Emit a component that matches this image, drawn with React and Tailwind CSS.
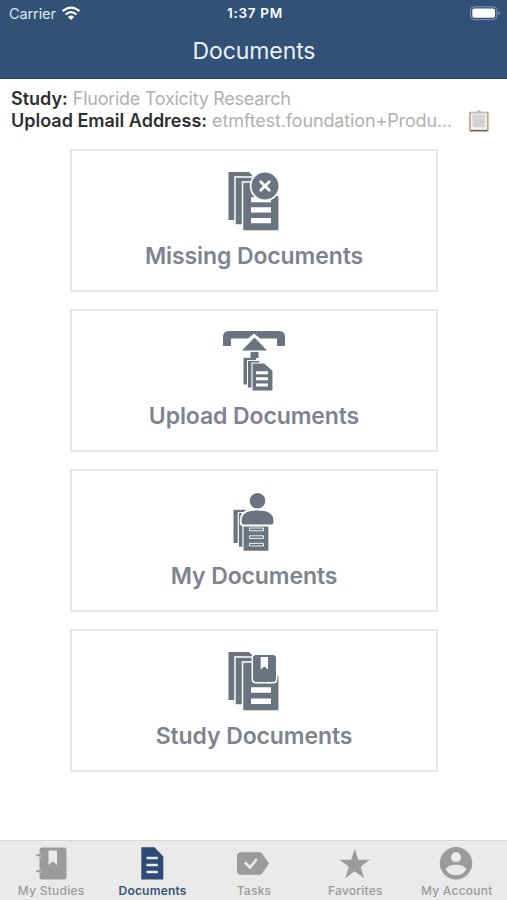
import React from 'react';

/**
 * Stack of pages shared by the large document icons.
 */
const PageStack = () => (
    <>
        <path d="M13.5 12H34L37 15V60H13.5Z" fill="#6a7481" />
        <path d="M20 17H40V65H20Z" fill="#6a7481" stroke="#fff" strokeWidth="1.5" />
        <path d="M27.5 22H50L64.2 36.5V71H27.5Z" fill="#6a7481" stroke="#fff" strokeWidth="1.5" />
    </>
);

const MissingIcon = () => (
    <svg viewBox="-1 0 80 80" className="h-20 w-20">
        <PageStack />
        <path d="M36 37.2H56V42.2H36ZM36 47.2H56V52.4H36ZM36 58H56V63.2H36Z" fill="#fff" />
        <circle cx="50" cy="26" r="14.4" fill="#6a7481" stroke="#fff" strokeWidth="1.7" />
        <path d="M45.7 21.7L54.3 30.3M54.3 21.7L45.7 30.3" stroke="#fff" strokeWidth="2.8" strokeLinecap="round" />
    </svg>
);

const UploadIcon = () => (
    <svg viewBox="-1 0 80 80" className="h-20 w-20">
        <path d="M8 26V17Q8 11 14 11H64Q70 11 70 17V26H62V18.5H45L39 13.5L33 18.5H16V26Z" fill="#6a7481" />
        <path d="M39.5 17.5L52 30.5H27Z" fill="#6a7481" />
        <path d="M35.5 32H43.5V38H35.5Z" fill="#6a7481" />
        <path d="M28.5 37.8H41V64.5H28.5Z" fill="#6a7481" />
        <path d="M32.5 40.5H45V68H32.5Z" fill="#6a7481" stroke="#fff" strokeWidth="1" />
        <path d="M37 43H49.5L58 50.7V71H37Z" fill="#6a7481" stroke="#fff" strokeWidth="1.1" />
        <path d="M41 51.2H53V54.2H41ZM41 57.2H53V60.2H41ZM41 63.5H53V66.5H41Z" fill="#fff" />
    </svg>
);

const PersonIcon = () => (
    <svg viewBox="-1 0 80 80" className="h-20 w-20">
        <path d="M18.5 29.8H34V63H18.5Z" fill="#6a7481" />
        <path d="M23.3 32.5H36V67.3H23.3Z" fill="#6a7481" stroke="#fff" strokeWidth="1.2" />
        <path d="M28 36H54V71.3H28Z" fill="#6a7481" stroke="#fff" strokeWidth="1.2" />
        <path d="M34.5 48H48.5V50.8H34.5ZM34.5 55.8H48.5V58.4H34.5ZM34.5 63.4H48.5V66H34.5Z" stroke="#fff" strokeWidth="0.9" fill="none" />
        <path d="M25.7 42.5V40Q26 31.5 36 30Q42.5 29 49 30Q59 31.5 59.3 40V42.5Q59.3 45.5 56 45.5H29Q25.7 45.5 25.7 42.5Z" fill="#6a7481" stroke="#fff" strokeWidth="1.8" />
        <circle cx="42.5" cy="20.8" r="8.4" fill="#6a7481" stroke="#fff" strokeWidth="1.2" />
    </svg>
);

const StudyIcon = () => (
    <svg viewBox="-1 0 80 80" className="h-20 w-20">
        <PageStack />
        <path d="M36 47.2H56V52.8H36ZM36 58.5H56V64H36Z" fill="#fff" />
        <path d="M37.3 18Q37.3 14.3 41 14.3H58Q61.7 14.3 61.7 18V39Q61.7 42.8 58 42.8H41Q37.3 42.8 37.3 39Z" fill="#6a7481" stroke="#fff" strokeWidth="1.5" />
        <path d="M45.7 17H53V29.5L49.3 26.5L45.7 29.5Z" fill="#fff" />
    </svg>
);

const StudiesTabIcon = () => (
    <svg viewBox="-2 0 36 36" className="h-9 w-9">
        <path d="M7 2.5H29Q31.5 2.5 31.5 5V32Q31.5 34.5 29 34.5H7Q4.5 34.5 4.5 32V5Q4.5 2.5 7 2.5Z" fill="#9b9b9b" />
        <path d="M4.8 7.8Q7.4 10.2 4.8 12.6M4.8 23.8Q7.4 26.2 4.8 28.6" stroke="#eaeaea" strokeWidth="0.7" fill="none" />
        <path d="M2 10.2H5.3M2 26.2H5.3" stroke="#9b9b9b" strokeWidth="2" strokeLinecap="round" />
        <path d="M13.5 5.5H22V20L17.8 16.2L13.5 20Z" fill="#eaeaea" />
    </svg>
);

const DocumentTabIcon = () => (
    <svg viewBox="0 0 36 36" className="h-9 w-9">
        <path d="M7.3 2.2H20.5L29.3 11.5V34.5H7.3Z" fill="#2d4b74" />
        <path d="M12.5 13H23.8M12.5 20H23.8M12.5 27H23.8" stroke="#eaeaea" strokeWidth="2.4" />
    </svg>
);

const TaskTabIcon = () => (
    <svg viewBox="0 0 36 36" className="h-9 w-9">
        <path d="M6 7.3H24.5Q26 7.3 27 8.5L34 18.5L27 28.5Q26 29.7 24.5 29.7H6Q2 29.7 2 25.7V11.3Q2 7.3 6 7.3Z" fill="#9b9b9b" />
        <path d="M10 17.5L15 22.5L21.8 14" stroke="#eaeaea" strokeWidth="2.7" fill="none" />
    </svg>
);

const StarTabIcon = () => (
    <svg viewBox="0 0 36 36" className="h-9 w-9">
        <path d="M17.7 3.8L21.2 14.8H32.9L23.6 21.7L27.1 33.3L17.7 26.3L8.3 33.3L11.8 21.7L2.4 14.8H14.2Z" fill="#9b9b9b" />
    </svg>
);

const AccountTabIcon = () => (
    <svg viewBox="0 0 36 36" className="h-9 w-9">
        <circle cx="18" cy="18.3" r="16.2" fill="#9b9b9b" />
        <circle cx="18" cy="12.2" r="5" fill="#eaeaea" />
        <path d="M7.5 24.2Q10.5 19.8 18 19.8Q25.5 19.8 28.5 24.2Q25 30.3 18 30.3Q11 30.3 7.5 24.2Z" fill="#eaeaea" />
    </svg>
);

const WifiIcon = () => (
    <svg viewBox="0 0 20 15" className="h-[15px] w-5" fill="none" stroke="#fff" strokeWidth="2.2">
        <path d="M1.6 5.2Q10 -2 18.4 5.2" />
        <path d="M4.6 8.5Q10 3.8 15.4 8.5" />
        <path d="M7 10.9Q10 8.2 13 10.9L10 14Z" fill="#fff" stroke="none" />
    </svg>
);

const BatteryIcon = () => (
    <svg viewBox="0 0 32 16" className="h-4 w-8">
        <rect x="1.5" y="0.8" width="26.3" height="12.8" rx="3.7" fill="none" stroke="#8499b5" strokeWidth="1" />
        <rect x="3.3" y="2.6" width="22.7" height="9.2" rx="1.8" fill="#fff" />
        <path d="M29.3 5.2Q31 6 31 7.2Q31 8.4 29.3 9.2Z" fill="#8499b5" />
    </svg>
);

const ClipboardIcon = () => (
    <svg viewBox="0 0 22 24" className="h-6 w-[22px] shrink-0">
        <rect x="1.2" y="2.8" width="19.4" height="20" rx="1.3" fill="#b09a70" />
        <rect x="2.7" y="3.4" width="16.4" height="17.8" fill="#f4f4f4" />
        <rect x="4.5" y="5.6" width="12.8" height="12.6" fill="#d3d2d5" />
        <path d="M2.7 21.4H19.1" stroke="#67635f" strokeWidth="1.1" />
        <path d="M3 4.6V3.2H8.5Q9 1.2 11 1.2T13.5 3.2H19V4.6Z" fill="#b9bbc0" />
    </svg>
);

const cards = [
    { label: 'Missing Documents', Icon: MissingIcon },
    { label: 'Upload Documents', Icon: UploadIcon },
    { label: 'My Documents', Icon: PersonIcon },
    { label: 'Study Documents', Icon: StudyIcon },
];

const tabs = [
    { label: 'My Studies', Icon: StudiesTabIcon },
    { label: 'Documents', Icon: DocumentTabIcon, active: true },
    { label: 'Tasks', Icon: TaskTabIcon },
    { label: 'Favorites', Icon: StarTabIcon },
    { label: 'My Account', Icon: AccountTabIcon },
];

const App = () => (
    <div className="flex h-[900px] w-[507px] flex-col overflow-hidden bg-white font-['Inter',sans-serif]">
        <header className="h-[79px] shrink-0 border-b border-[#28466d] bg-[#325176] text-white">
            <div className="grid h-[27px] grid-cols-3 items-center pl-[9px] pr-1.5">
                <div className="flex items-center gap-[5px] text-[14.5px] tracking-[-0.1px] text-[#dfe8f4]">
                    <span>Carrier</span>
                    <WifiIcon />
                </div>
                <span className="text-center text-[13.5px] font-semibold tracking-[0.7px]">1:37 PM</span>
                <div className="flex justify-end"><BatteryIcon /></div>
            </div>
            <h1 className="pl-px text-center text-[23px] leading-[49px] tracking-[-0.1px] text-[#e8f1fc]">Documents</h1>
        </header>

        <section className="flex h-[70px] shrink-0 justify-between pl-[11px] pr-[17px] pt-[9px] text-[18px] leading-[22px] text-[#b0b0b0]">
            <div className="whitespace-nowrap">
                <p><span className="font-semibold text-[#2f2f2f]">Study:</span> <span className="tracking-[-0.27px]">Fluoride Toxicity Research</span></p>
                <p><span className="font-semibold text-[#2f2f2f]">Upload Email Address:</span> <span className="tracking-[-0.14px]">etmftest.foundation+Produ...</span></p>
            </div>
            <div className="pt-[21px]"><ClipboardIcon /></div>
        </section>

        <main className="flex flex-1 flex-col items-center gap-[17px]">
            {cards.map(({ label, Icon }) => (
                <button key={label} className="flex h-[143px] w-[368px] shrink-0 flex-col items-center border-2 border-[#e5e7e8] pt-[9px]">
                    <Icon />
                    <span className="mt-[3px] pl-px text-[23px] font-semibold leading-[26px] tracking-[-0.1px] text-[#7e848f]">{label}</span>
                </button>
            ))}
        </main>

        <nav className="grid h-[60px] shrink-0 grid-cols-5 border-t border-[#d8d8d8] bg-[#eaeaea]">
            {tabs.map(({ label, Icon, active }) => (
                <button key={label} className="flex flex-col items-center pt-[4px]">
                    <Icon />
                    <span className={`mt-[2px] whitespace-nowrap pl-px text-[12px] leading-4 ${active ? 'font-semibold tracking-[0.2px] text-[#3a557b]' : 'font-medium tracking-[0.25px] text-[#9b9b9b]'}`}>{label}</span>
                </button>
            ))}
        </nav>
    </div>
);

export default App;
